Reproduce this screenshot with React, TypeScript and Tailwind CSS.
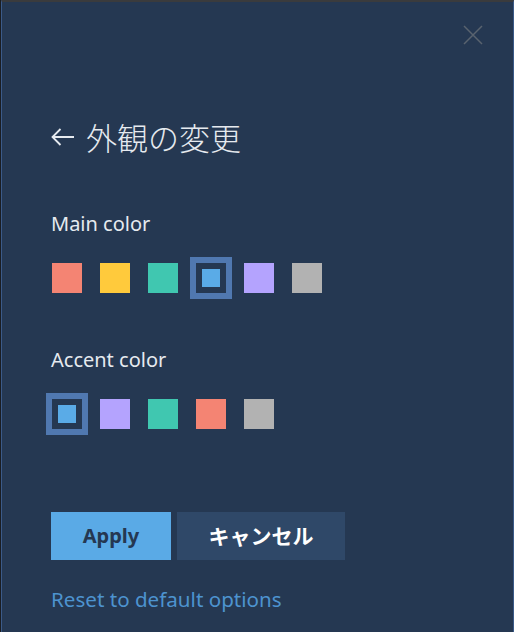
import { useState } from 'react';

const MAIN = ['#f48473', '#ffca3c', '#40c7b0', '#5aabe7', '#b4a3fe', '#b2b2b2'];
const ACCENT = ['#5aabe7', '#b4a3fe', '#40c7b0', '#f48473', '#b2b2b2'];

function Swatch({ color, selected, onClick }: { color: string; selected: boolean; onClick: () => void }) {
  return (
    <button
      type="button"
      onClick={onClick}
      className={
        selected
          ? 'flex h-[42px] w-[42px] items-center justify-center border-[6px] border-[#5078b0] bg-[#253852]'
          : 'flex h-[42px] w-[42px] items-center justify-center'
      }
    >
      <span
        className={selected ? 'block h-[18px] w-[18px]' : 'block h-[30px] w-[30px]'}
        style={{ backgroundColor: color }}
      />
    </button>
  );
}

export default function App() {
  const [main, setMain] = useState(3);
  const [accent, setAccent] = useState(0);

  return (
    <div className="h-[632px] w-[514px] overflow-hidden bg-[#1a1d22] pl-px">
      <div
        className="relative h-full border-t-2 border-l border-r border-t-[#3a3b3d] border-l-[#3b5a88] border-r-[#3b5a88] bg-[#253852] px-[49px]"
        style={{ fontFamily: '"Noto Sans", "Noto Sans CJK JP", sans-serif' }}
      >
        <button type="button" className="absolute right-[29px] top-[22px] text-[#59636f]">
          <svg width="22" height="22" viewBox="0 0 22 22" fill="none" stroke="currentColor" strokeWidth="1.5">
            <path d="M2 2 L20 20 M20 2 L2 20" />
          </svg>
        </button>

        <h1
          className="mt-[115px] flex items-center gap-[11px] text-[31px] leading-[40px] font-light text-[#e6eaef]"
          style={{ fontFamily: '"Noto Sans CJK JP", sans-serif' }}
        >
          <svg width="24" height="20" viewBox="0 0 24 20" fill="none" stroke="currentColor" strokeWidth="1.8">
            <path d="M23 10 H1.5 M9.5 2 L1.5 10 L9.5 18" />
          </svg>
          外観の変更
        </h1>

        <div className="mt-[53px] text-[20px] leading-[28px] text-[#e6eaef]">Main color</div>
        <div className="mt-[19px] -ml-[5px] flex gap-[6px]">
          {MAIN.map((c, i) => (
            <Swatch key={c} color={c} selected={main === i} onClick={() => setMain(i)} />
          ))}
        </div>

        <div className="mt-[47px] text-[20px] leading-[28px] text-[#e6eaef]">Accent color</div>
        <div className="mt-[19px] -ml-[5px] flex gap-[6px]">
          {ACCENT.map((c, i) => (
            <Swatch key={c} color={c} selected={accent === i} onClick={() => setAccent(i)} />
          ))}
        </div>

        <div className="mt-[77px] flex gap-[6px]">
          <button
            type="button"
            className="h-[48px] w-[120px] bg-[#5aaae6] text-[20px] font-bold text-[#253852]"
          >
            Apply
          </button>
          <button
            type="button"
            className="h-[48px] w-[168px] bg-[#2f4868] text-[21px] font-bold text-white"
            style={{ fontFamily: '"Noto Sans CJK JP", sans-serif' }}
          >
            キャンセル
          </button>
        </div>

        <a href="#" className="mt-[25px] block text-[20.6px] leading-[28px] text-[#4d93cf]">
          Reset to default options
        </a>
      </div>
    </div>
  );
}
